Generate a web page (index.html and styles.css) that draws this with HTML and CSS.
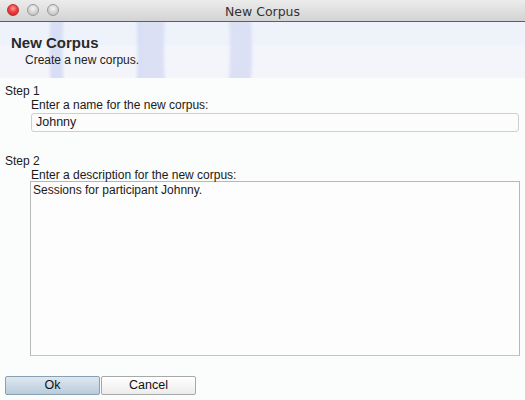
FILE: index.html
```html
<!DOCTYPE html>
<html>
<head>
<meta charset="utf-8">
<link rel="stylesheet" href="styles.css">
</head>
<body>
<div class="window">
  <div class="titlebar">
    <div class="lights">
      <span class="light red"></span>
      <span class="light gray"></span>
      <span class="light gray"></span>
    </div>
    <div class="title">New Corpus</div>
  </div>
  <div class="banner">
    <svg class="deco" width="525" height="56" viewBox="0 0 525 56">
      <defs>
        <filter id="soft" x="-10%" y="-10%" width="120%" height="120%">
          <feGaussianBlur stdDeviation="1.5"/>
        </filter>
      </defs>
      <rect x="0" y="0" width="525" height="56" fill="#eef2fb"/>
      <rect x="0" y="23" width="525" height="33" fill="#f3f5fb"/>
      <g filter="url(#soft)">
        <ellipse cx="100" cy="28" rx="44" ry="140" fill="none" stroke="#d8def5" stroke-width="13"/>
        <ellipse cx="197" cy="28" rx="44" ry="140" fill="none" stroke="#dbe0f5" stroke-width="22"/>
      </g>
    </svg>
    <div class="banner-text">
      <div class="banner-title">New Corpus</div>
      <div class="banner-sub">Create a new corpus.</div>
    </div>
  </div>
  <div class="content">
    <div class="step">
      <div class="step-label">Step 1</div>
      <div class="step-body">
        <div class="prompt">Enter a name for the new corpus:</div>
        <div class="field">Johnny</div>
      </div>
    </div>
    <div class="step step2">
      <div class="step-label">Step 2</div>
      <div class="step-body">
        <div class="prompt">Enter a description for the new corpus:</div>
        <div class="area">Sessions for participant Johnny.</div>
      </div>
    </div>
    <div class="buttons">
      <div class="btn ok">Ok</div>
      <div class="btn">Cancel</div>
    </div>
  </div>
</div>
</body>
</html>
```
FILE: styles.css
```css
html, body {
  margin: 0;
  padding: 0;
  background: #fbfcfc;
}
.window {
  width: 525px;
  height: 400px;
  overflow: hidden;
  font-family: "Liberation Sans", Arial, sans-serif;
  font-size: 12px;
  color: #1a1a1a;
}
.titlebar {
  height: 21px;
  border-bottom: 1px solid #5e5e5e;
  background: linear-gradient(#ececec, #d3d3d3);
  position: relative;
  display: flex;
  align-items: center;
  justify-content: center;
}
.lights {
  position: absolute;
  left: 7px;
  top: 4px;
  display: flex;
  gap: 8px;
}
.light {
  width: 12px;
  height: 12px;
  border-radius: 50%;
  box-sizing: border-box;
}
.light.red {
  background: radial-gradient(circle at 50% 35%, #ff9a9a 0%, #f24040 45%, #c01818 100%);
  border: 1px solid #b33;
}
.light.gray {
  background: radial-gradient(circle at 50% 35%, #f4f4f4 0%, #d2d2d2 55%, #b8b8b8 100%);
  border: 1px solid #9a9a9a;
}
.title {
  font-family: "DejaVu Sans", sans-serif;
  font-size: 12.5px;
  color: #333;
  padding-top: 1px;
}
.banner {
  height: 56px;
  position: relative;
  overflow: hidden;
}
.deco {
  position: absolute;
  left: 0;
  top: 0;
}
.banner-text {
  position: relative;
  padding: 12px 0 0 11px;
}
.banner-title {
  font-size: 15px;
  font-weight: bold;
  color: #2a2a2a;
  line-height: 18px;
}
.banner-sub {
  padding-left: 14px;
  font-size: 12px;
  color: #222;
  line-height: 15px;
  margin-top: 1px;
}
.content {
  padding: 6px 6px 0 5px;
}
.step-label {
  line-height: 14px;
}
.step-body {
  padding-left: 26px;
}
.prompt {
  line-height: 14px;
}
.field {
  margin-top: 1px;
  height: 19px;
  border: 1px solid #cfcfcf;
  border-radius: 3px;
  background: #fcfcfc;
  box-sizing: border-box;
  padding: 1px 4px;
  font-size: 12.5px;
  line-height: 15px;
}
.step2 {
  margin-top: 22px;
}
.area {
  margin-top: -1px;
  margin-left: -1px;
  margin-right: -1px;
  height: 175px;
  border: 1px solid #b8b8b8;
  border-bottom-color: #c4c4c4;
  background: #fdfdfd;
  box-sizing: border-box;
  padding: 1px 2px;
  font-size: 12px;
  line-height: 14px;
}
.buttons {
  margin-top: 20px;
  display: flex;
  gap: 1px;
}
.btn {
  width: 95px;
  height: 19px;
  box-sizing: border-box;
  border: 1px solid #a8a8a8;
  border-radius: 2px;
  background: linear-gradient(#ffffff, #ececec);
  text-align: center;
  font-size: 12.5px;
  line-height: 17px;
  color: #111;
}
.btn.ok {
  border-color: #8a9fb2;
  background: linear-gradient(#dfe8f0, #b9cbdb);
}
```
